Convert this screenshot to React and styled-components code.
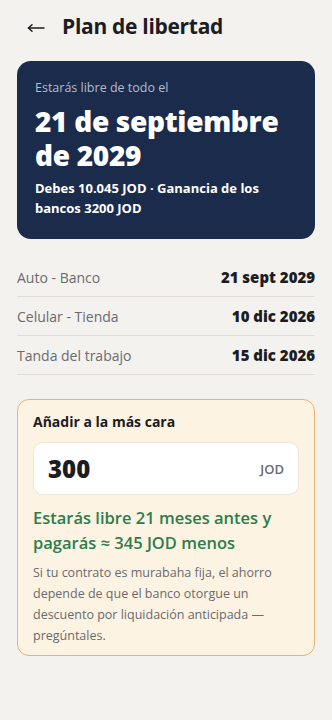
import React from 'react'
import styled, { createGlobalStyle } from 'styled-components'

const Global = createGlobalStyle`
  html, body {
    margin: 0;
    padding: 0;
    background: #f3f2ee;
  }
  body {
    font-family: "Open Sans", "Noto Sans", sans-serif;
    color: #1c1c22;
  }
`

const Page = styled.div`
  width: 332px;
  min-height: 720px;
  box-sizing: border-box;
  padding: 12px 17px 24px;
`

const Header = styled.div`
  display: flex;
  align-items: center;
  gap: 17px;
  height: 28px;
  margin-bottom: 21px;
`

const Back = styled.svg`
  width: 18px;
  height: 10px;
  margin-left: 10px;
  margin-top: 3px;
  flex: none;
`

const Title = styled.h1`
  margin: 0;
  font-size: 21px;
  font-weight: 700;
  letter-spacing: -0.3px;
`

const Hero = styled.div`
  background: #1b2b4b;
  border-radius: 14px;
  padding: 18px 18px 21px;
  color: #fff;
`

const HeroLabel = styled.div`
  font-size: 12.5px;
  color: #b5bccb;
  margin-bottom: 8px;
`

const HeroDate = styled.div`
  font-size: 28px;
  font-weight: 800;
  line-height: 34px;
  letter-spacing: -0.3px;
  margin-bottom: 6px;
`

const HeroNote = styled.div`
  font-size: 13px;
  font-weight: 700;
  line-height: 20px;
`

const List = styled.div`
  margin-top: 19px;
  margin-bottom: 24px;
`

const Row = styled.div`
  display: flex;
  justify-content: space-between;
  align-items: center;
  height: 38px;
  border-bottom: 1px solid #e1ded8;
`

const Label = styled.span`
  font-size: 14px;
  color: #6a6a70;
`

const Value = styled.span`
  font-size: 15px;
  font-weight: 800;
  color: #1c1c22;
`

const Extra = styled.div`
  background: #fdf3e2;
  border: 1px solid #e3b56d;
  border-radius: 12px;
  padding: 12px 15px 9px;
`

const ExtraTitle = styled.div`
  font-size: 14px;
  font-weight: 700;
  margin-bottom: 11px;
`

const Field = styled.div`
  display: flex;
  align-items: center;
  justify-content: space-between;
  height: 53px;
  box-sizing: border-box;
  padding: 0 14px;
  background: #fff;
  border: 1px solid #ede6da;
  border-radius: 10px;
  margin-bottom: 10px;
`

const Amount = styled.span`
  font-size: 24px;
  font-weight: 800;
  color: #1c1c22;
`

const Unit = styled.span`
  font-size: 13px;
  color: #6a6a70;
  font-weight: 600;
`

const Gain = styled.div`
  font-size: 16.5px;
  line-height: 25px;
  color: #2c7d4c;
  font-weight: 600;
  margin-bottom: 7px;
`

const Hint = styled.div`
  font-size: 12.5px;
  line-height: 21px;
  color: #6a6a70;
`

const payoffs = [
  { name: 'Auto - Banco', date: '21 sept 2029' },
  { name: 'Celular - Tienda', date: '10 dic 2026' },
  { name: 'Tanda del trabajo', date: '15 dic 2026' },
]

export default function App() {
  return (
    <>
      <Global />
      <Page>
        <Header>
          <Back viewBox="0 0 18 10" fill="none" stroke="#1c1c22" strokeWidth="1.5" strokeLinecap="round" strokeLinejoin="round">
            <path d="M1.5 5H17" />
            <path d="M5 1.8L1.5 5L5 8.2" />
          </Back>
          <Title>Plan de libertad</Title>
        </Header>
        <Hero>
          <HeroLabel>Estarás libre de todo el</HeroLabel>
          <HeroDate>21 de septiembre de 2029</HeroDate>
          <HeroNote>Debes 10.045 JOD · Ganancia de los bancos 3200 JOD</HeroNote>
        </Hero>
        <List>
          {payoffs.map((p) => (
            <Row key={p.name}>
              <Label>{p.name}</Label>
              <Value>{p.date}</Value>
            </Row>
          ))}
        </List>
        <Extra>
          <ExtraTitle>Añadir a la más cara</ExtraTitle>
          <Field>
            <Amount>300</Amount>
            <Unit>JOD</Unit>
          </Field>
          <Gain>Estarás libre 21 meses antes y pagarás ≈ 345 JOD menos</Gain>
          <Hint>
            Si tu contrato es murabaha fija, el ahorro depende de que el banco otorgue un
            descuento por liquidación anticipada — pregúntales.
          </Hint>
        </Extra>
      </Page>
    </>
  )
}
